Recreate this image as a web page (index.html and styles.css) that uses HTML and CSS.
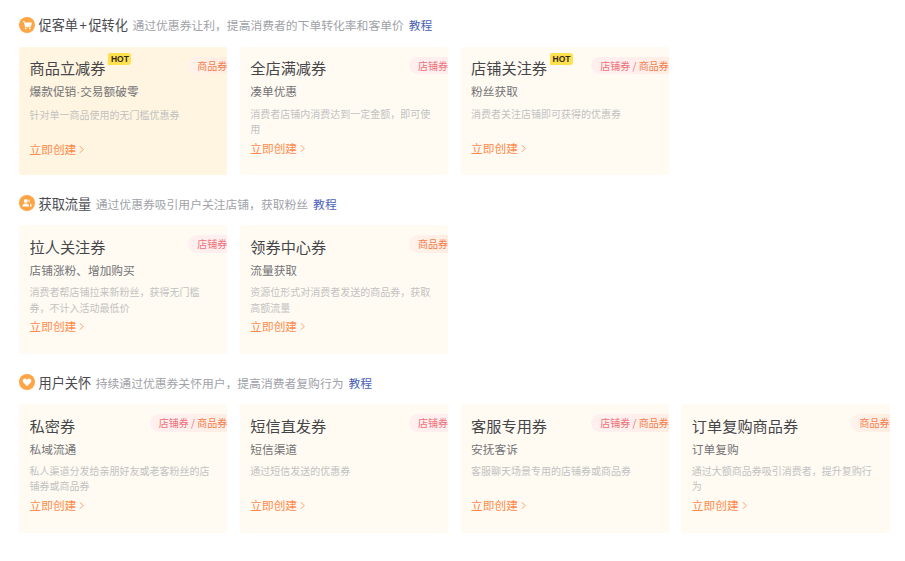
FILE: index.html
```html
<!DOCTYPE html>
<html lang="zh-CN">
<head>
<meta charset="utf-8">
<title>优惠券</title>
<link rel="stylesheet" href="styles.css">
</head>
<body>
<main class="page">
  <section class="section">
    <header class="head">
      <svg class="icon" viewBox="0 0 16 16"><circle cx="8" cy="8" r="8" fill="#ffa445"/><path d="M3.800 4.500h1.500l1.100 5.200h5l1-3.800H5.600" fill="#fff" stroke="#fff" stroke-width=".9" stroke-linejoin="round"/><circle cx="6.800" cy="11.400" r=".9" fill="#fff"/><circle cx="10.800" cy="11.400" r=".9" fill="#fff"/></svg>
      <span class="head-title">促客单<span class="plus">+</span>促转化</span>
      <span class="head-desc">通过优惠券让利，提高消费者的下单转化率和客单价</span>
      <a class="head-link">教程</a>
    </header>
    <div class="cards">
      <article class="card card-hot">
        <h3 class="title">商品立减券<span class="hot">HOT</span></h3>
        <p class="sub">爆款促销<span class="dot">·</span>交易额破零</p>
        <p class="desc">针对单一商品使用的无门槛优惠券</p>
        <a class="go">立即创建<svg class="chev" viewBox="0 0 6 10"><path d="M1 1l4 4-4 4"/></svg></a>
        <span class="tag tag-goods">商品券</span>
      </article>
      <article class="card">
        <h3 class="title">全店满减券</h3>
        <p class="sub">凑单优惠</p>
        <p class="desc">消费者店铺内消费达到一定金额，即可使用</p>
        <a class="go">立即创建<svg class="chev" viewBox="0 0 6 10"><path d="M1 1l4 4-4 4"/></svg></a>
        <span class="tag tag-shop">店铺券</span>
      </article>
      <article class="card">
        <h3 class="title">店铺关注券<span class="hot">HOT</span></h3>
        <p class="sub">粉丝获取</p>
        <p class="desc">消费者关注店铺即可获得的优惠券</p>
        <a class="go">立即创建<svg class="chev" viewBox="0 0 6 10"><path d="M1 1l4 4-4 4"/></svg></a>
        <span class="tag tag-both"><span class="pink">店铺券 / </span>商品券</span>
      </article>
    </div>
  </section>

  <section class="section">
    <header class="head">
      <svg class="icon" viewBox="0 0 16 16"><circle cx="8" cy="8" r="8" fill="#ffa445"/><circle cx="6.800" cy="5.900" r="2" fill="#fff"/><path d="M3.400 11.600c0-2 1.500-3 3.400-3s3.400 1 3.400 3z" fill="#fff"/><path d="M9.600 4.200a1.800 1.800 0 0 1 0 3.400zM10.800 8.600c1.200.3 1.900 1.300 1.900 3h-1.500c0-1.200-.1-2.200-.4-3z" fill="#fff"/></svg>
      <span class="head-title">获取流量</span>
      <span class="head-desc">通过优惠券吸引用户关注店铺，获取粉丝</span>
      <a class="head-link">教程</a>
    </header>
    <div class="cards">
      <article class="card">
        <h3 class="title">拉人关注券</h3>
        <p class="sub">店铺涨粉、增加购买</p>
        <p class="desc">消费者帮店铺拉来新粉丝，获得无门槛券，不计入活动最低价</p>
        <a class="go">立即创建<svg class="chev" viewBox="0 0 6 10"><path d="M1 1l4 4-4 4"/></svg></a>
        <span class="tag tag-shop">店铺券</span>
      </article>
      <article class="card">
        <h3 class="title">领券中心券</h3>
        <p class="sub">流量获取</p>
        <p class="desc">资源位形式对消费者发送的商品券，获取高额流量</p>
        <a class="go">立即创建<svg class="chev" viewBox="0 0 6 10"><path d="M1 1l4 4-4 4"/></svg></a>
        <span class="tag tag-goods">商品券</span>
      </article>
    </div>
  </section>

  <section class="section">
    <header class="head">
      <svg class="icon" viewBox="0 0 16 16"><circle cx="8" cy="8" r="8" fill="#ffa445"/><path d="M8 12.200 4.300 8.400a2.300 2.300 0 0 1 0-3.200 2.300 2.300 0 0 1 3.200 0l.5.5.5-.5a2.300 2.300 0 0 1 3.200 0 2.300 2.300 0 0 1 0 3.200z" fill="#fff"/></svg>
      <span class="head-title">用户关怀</span>
      <span class="head-desc">持续通过优惠券关怀用户，提高消费者复购行为</span>
      <a class="head-link">教程</a>
    </header>
    <div class="cards">
      <article class="card">
        <h3 class="title">私密券</h3>
        <p class="sub">私域流通</p>
        <p class="desc">私人渠道分发给亲朋好友或老客粉丝的店铺券或商品券</p>
        <a class="go">立即创建<svg class="chev" viewBox="0 0 6 10"><path d="M1 1l4 4-4 4"/></svg></a>
        <span class="tag tag-both"><span class="pink">店铺券 / </span>商品券</span>
      </article>
      <article class="card">
        <h3 class="title">短信直发券</h3>
        <p class="sub">短信渠道</p>
        <p class="desc">通过短信发送的优惠券</p>
        <a class="go">立即创建<svg class="chev" viewBox="0 0 6 10"><path d="M1 1l4 4-4 4"/></svg></a>
        <span class="tag tag-shop">店铺券</span>
      </article>
      <article class="card">
        <h3 class="title">客服专用券</h3>
        <p class="sub">安抚客诉</p>
        <p class="desc">客服聊天场景专用的店铺券或商品券</p>
        <a class="go">立即创建<svg class="chev" viewBox="0 0 6 10"><path d="M1 1l4 4-4 4"/></svg></a>
        <span class="tag tag-both"><span class="pink">店铺券 / </span>商品券</span>
      </article>
      <article class="card">
        <h3 class="title">订单复购商品券</h3>
        <p class="sub">订单复购</p>
        <p class="desc">通过大额商品券吸引消费者，提升复购行为</p>
        <a class="go">立即创建<svg class="chev" viewBox="0 0 6 10"><path d="M1 1l4 4-4 4"/></svg></a>
        <span class="tag tag-goods">商品券</span>
      </article>
    </div>
  </section>
</main>
</body>
</html>
```
FILE: styles.css
```css
* { box-sizing: border-box; }
html, body { margin: 0; background: #fff; }
body { font-family: "Noto Sans CJK SC", "Noto Sans", sans-serif; }
.page { padding: 14px 16px 0 19px; }
.section { margin-bottom: 17.75px; }
.head { display: flex; align-items: center; height: 21px; margin-bottom: 11.5px; white-space: nowrap; }
.icon { width: 16px; height: 16px; margin-right: 3.5px; flex: none; }
.head-title { font-size: 13.2px; color: #4a4a50; margin-right: 4.5px; }
.plus { padding: 0 1.5px; }
.head-desc { font-size: 11.8px; color: #a0a2a8; margin-right: 5px; }
.head-link { font-size: 11.8px; color: #4a5fb5; }
.cards { display: grid; grid-template-columns: repeat(4, 208.2px); column-gap: 12.6px; }
.card { position: relative; height: 128.5px; padding: 8.5px 10px 0 10.5px; background: #fffbf2; border-radius: 3px; overflow: hidden; }
.card-hot { background: #fff5e1; }
.title { position: relative; display: inline-block; margin: 0; font-size: 15.2px; line-height: 22px; font-weight: 400; color: #46464a; }
.hot { position: absolute; left: 100%; top: -3.5px; margin-left: 3px; height: 12px; padding: 0 2.5px; border-radius: 2px 3px 3px 1px; background: #ffe14f; color: #33291a; font-size: 8.5px; line-height: 12px; font-family: "Liberation Sans", sans-serif; font-weight: 700; }
.sub { margin: 4px 0 0; font-size: 11.7px; line-height: 16px; color: #737376; }
.dot { font-family: "Liberation Sans", sans-serif; }
.desc { margin: 6.5px 0 0; height: 31px; font-size: 10px; line-height: 15.3px; color: #c2c2c2; }
.go { display: flex; align-items: center; margin-top: 3px; font-size: 11.7px; line-height: 16px; color: #ff8a4c; }
.chev { width: 5px; height: 9px; margin: 1px 0 0 3px; fill: none; stroke: #ff8a4c; stroke-width: 1; }
.tag { position: absolute; top: 10px; right: 0; height: 17.5px; padding-left: 9px; border-radius: 9px 0 0 9px; font-size: 10px; line-height: 17.5px; white-space: nowrap; }
.tag-goods { background: linear-gradient(90deg, #fff2ec, #ffede0); color: #f47c4c; }
.tag-shop { background: linear-gradient(90deg, #ffefef, #ffeeee); color: #f0707a; }
.tag-both { background: linear-gradient(90deg, #ffefef 40%, #ffeee2); color: #f47c4c; }
.pink { color: #ef6f78; }
```
